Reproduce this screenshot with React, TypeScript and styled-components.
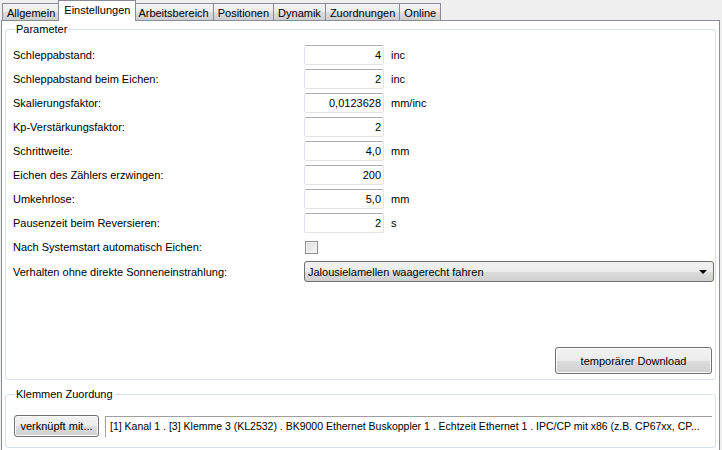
import React from "react";
import styled, { createGlobalStyle } from "styled-components";

const GlobalStyle = createGlobalStyle`
  html, body {
    margin: 0;
    padding: 0;
    background: #f0f0f0;
  }
  body {
    font-family: "Liberation Sans", Arial, sans-serif;
    font-size: 11px;
    color: #000;
  }
`;

const Window = styled.div`
  width: 722px;
  height: 450px;
  background: #f0f0f0;
  display: flex;
  flex-direction: column;
  padding: 0 2px 0 1px;
  box-sizing: border-box;
`;

const TabStrip = styled.div`
  display: flex;
  align-items: flex-end;
  height: 21px;
  padding-left: 1px;
  position: relative;
  z-index: 1;
`;

const Tab = styled.div<{ $active?: boolean }>`
  box-sizing: border-box;
  height: ${({ $active }) => ($active ? "21px" : "18px")};
  padding: ${({ $active }) => ($active ? "2px 5px 0" : "2px 4px 0")};
  border: 1px solid #898c95;
  border-bottom: ${({ $active }) => ($active ? "none" : "1px solid #898c95")};
  margin-left: ${({ $active }) => ($active ? "-2px" : "-1px")};
  margin-right: ${({ $active }) => ($active ? "-2px" : "0")};
  background: ${({ $active }) =>
    $active ? "#ffffff" : "linear-gradient(#f3f3f3 0%, #ebebeb 50%, #dddddd 51%, #cfcfcf 100%)"};
  position: relative;
  z-index: ${({ $active }) => ($active ? 2 : 1)};
  white-space: nowrap;
  line-height: 14px;
  &:first-child {
    margin-left: 0;
  }
`;

const Panel = styled.div`
  flex: 0 0 430px;
  margin-top: -1px;
  background: #ffffff;
  border: 1px solid #898c95;
  border-bottom: none;
  box-sizing: border-box;
  padding: 2px 3px 2px 3px;
  display: flex;
  flex-direction: column;
  gap: 8px;
`;

const Group = styled.fieldset<{ $grow?: boolean; $h?: number }>`
  margin: 0;
  border: 1px solid #d5dfe5;
  border-radius: 3px;
  padding: 0 1px 5px 7px;
  min-width: 0;
  box-sizing: border-box;
  ${({ $grow }) => ($grow ? "flex: 1;" : "")}
  ${({ $h }) => ($h ? `flex: 0 0 ${$h}px;` : "")}
  display: flex;
  flex-direction: column;
`;

const Legend = styled.legend`
  padding: 0 1px;
  margin-left: 2px;
  line-height: 13px;
`;

const Rows = styled.div`
  display: flex;
  flex-direction: column;
  gap: 4px;
  padding-top: 9px;
`;

const Row = styled.div`
  display: grid;
  grid-template-columns: 291px 80px 1fr;
  align-items: center;
  height: 20px;
`;

const Label = styled.span`
  white-space: nowrap;
`;

const NumInput = styled.div`
  box-sizing: border-box;
  height: 20px;
  border: 1px solid #e2e3ea;
  border-top-color: #abadb3;
  border-radius: 2px;
  text-align: right;
  padding: 0 2px;
  line-height: 18px;
`;

const Unit = styled.span`
  padding-left: 7px;
`;

const CheckBox = styled.div`
  width: 11px;
  height: 11px;
  border: 1px solid #8e8f8f;
  background: linear-gradient(135deg, #dcdcdc, #f6f6f6);
  box-shadow: inset 0 0 0 1px #f4f4f4;
  margin-left: 1px;
`;

const Combo = styled.div`
  grid-column: 2 / 4;
  box-sizing: border-box;
  height: 21px;
  border: 1px solid #707070;
  border-radius: 3px;
  background: linear-gradient(#f2f2f2 0%, #ebebeb 50%, #dddddd 51%, #cfcfcf 100%);
  display: flex;
  align-items: center;
  justify-content: space-between;
  padding: 0 6px 0 3px;
`;

const Arrow = styled.span`
  width: 0;
  height: 0;
  border-left: 4px solid transparent;
  border-right: 4px solid transparent;
  border-top: 4px solid #000;
`;

const ButtonBar = styled.div`
  flex: 1;
  display: flex;
  align-items: flex-end;
  justify-content: flex-end;
  padding-right: 2px;
`;

const Button = styled.div<{ $w: number; $h: number }>`
  box-sizing: border-box;
  width: ${({ $w }) => $w}px;
  height: ${({ $h }) => $h}px;
  border: 1px solid #707070;
  border-radius: 3px;
  background: linear-gradient(#f2f2f2 0%, #ebebeb 50%, #dddddd 51%, #cfcfcf 100%);
  box-shadow: inset 0 0 0 1px #fbfbfb;
  display: flex;
  align-items: center;
  justify-content: center;
  flex-shrink: 0;
`;

const LinkRow = styled.div`
  display: flex;
  align-items: center;
  gap: 6px;
  padding: 14px 2px 0 1px;
`;

const LinkField = styled.div`
  flex: 1;
  min-width: 0;
  box-sizing: border-box;
  height: 21px;
  border-top: 1px solid #a0a0a0;
  border-left: 1px solid #a0a0a0;
  padding: 0 4px;
  line-height: 19px;
  font-size: 10.5px;
  white-space: nowrap;
  overflow: hidden;
`;

const tabs = ["Allgemein", "Einstellungen", "Arbeitsbereich", "Positionen", "Dynamik", "Zuordnungen", "Online"];

const params: { label: string; value: string; unit?: string }[] = [
  { label: "Schleppabstand:", value: "4", unit: "inc" },
  { label: "Schleppabstand beim Eichen:", value: "2", unit: "inc" },
  { label: "Skalierungsfaktor:", value: "0,0123628", unit: "mm/inc" },
  { label: "Kp-Verstärkungsfaktor:", value: "2" },
  { label: "Schrittweite:", value: "4,0", unit: "mm" },
  { label: "Eichen des Zählers erzwingen:", value: "200" },
  { label: "Umkehrlose:", value: "5,0", unit: "mm" },
  { label: "Pausenzeit beim Reversieren:", value: "2", unit: "s" },
];

export default function App() {
  return (
    <>
      <GlobalStyle />
      <Window>
        <TabStrip>
          {tabs.map((t) => (
            <Tab key={t} $active={t === "Einstellungen"}>
              {t}
            </Tab>
          ))}
        </TabStrip>
        <Panel>
          <Group $grow>
            <Legend>Parameter</Legend>
            <Rows>
              {params.map((p) => (
                <Row key={p.label}>
                  <Label>{p.label}</Label>
                  <NumInput>{p.value}</NumInput>
                  <Unit>{p.unit}</Unit>
                </Row>
              ))}
              <Row>
                <Label>Nach Systemstart automatisch Eichen:</Label>
                <CheckBox />
              </Row>
              <Row>
                <Label>Verhalten ohne direkte Sonneneinstrahlung:</Label>
                <Combo>
                  <span>Jalousielamellen waagerecht fahren</span>
                  <Arrow />
                </Combo>
              </Row>
            </Rows>
            <ButtonBar>
              <Button $w={157} $h={27}>temporärer Download</Button>
            </ButtonBar>
          </Group>
          <Group $h={60}>
            <Legend>Klemmen Zuordung</Legend>
            <LinkRow>
              <Button $w={85} $h={22}>verknüpft mit...</Button>
              <LinkField>
                [1] Kanal 1 . [3] Klemme 3 (KL2532) . BK9000 Ethernet Buskoppler 1 . Echtzeit Ethernet 1 . IPC/CP mit x86 (z.B. CP67xx, CP...
              </LinkField>
            </LinkRow>
          </Group>
        </Panel>
      </Window>
    </>
  );
}
